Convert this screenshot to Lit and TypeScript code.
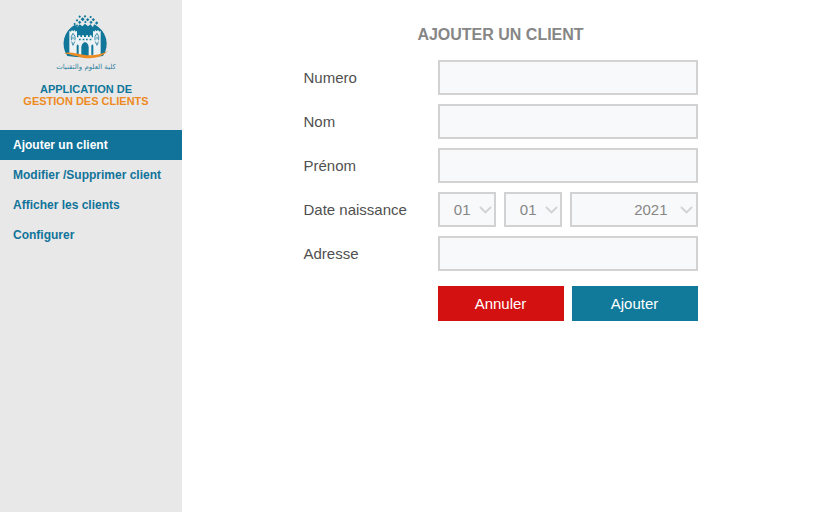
import { LitElement, html, css, svg } from "lit";
import { customElement, property, state } from "lit/decorators.js";
import { classMap } from "lit/directives/class-map.js";

const SPARKS: Array<[number, number, number]> = [
  [108, 25, 4], [92, 26, 4], [125, 27, 4], [84, 37, 4], [101, 34, 6],
  [116, 35, 5], [133, 35, 5], [92, 43, 5], [109, 42, 4], [126, 43, 5], [143, 45, 5],
  [77, 48, 4], [137, 53, 4], [84, 53, 4],
];

@customElement("faculty-logo")
class FacultyLogo extends LitElement {
  static styles = css`
    :host { display: flex; flex-direction: column; align-items: center; }
    .mark { display: block; width: 74px; height: 54px; }
    .caption {
      font: 7px/10px "DejaVu Sans", sans-serif;
      color: #2f819e;
      white-space: nowrap;
    }
  `;
  render() {
    return html`
      <svg class="mark" viewBox="0 0 222 162" aria-hidden="true">
        <path fill="#11779a" d="M55 144A65 65 0 0 1 78 50L85 58L92 49L100 55L108 47L117 55L125 49L131 57L138 50A65 65 0 0 1 162 144Q108 152 55 144Z" />
        ${SPARKS.map(([x, y, r]) => svg`<path fill="#11779a" d="M${x} ${y - r}l${r} ${r}l${-r} ${r}l${-r} ${-r}z" />`)}
        <path fill="#edf2f4" d="M61 68L65 71L69 66L73 70L77 66L80 71L84 68V88H88V82H94V87H99V82H105V87H111V82H117V87H122V82H128V88H132V68L136 71L139 66L143 70L147 66L151 71L155 68V140Q108 150 61 137Z" />
        <g fill="none" stroke="#3b8daa" stroke-width="3">
          <path d="M67 97V85L72 76L78 85V97M138 97V85L144 76L149 85V97" />
          <path d="M72 86V94M144 86V94M68 101L72 112L77 101M139 101L144 112L148 101" />
        </g>
        <g fill="#11779a">
          <path d="M97 146V118Q98 105 108 102Q118 105 119 118V146Z" />
          <path d="M90 92h5v5h-5zM101 92h5v5h-5zM111 92h5v5h-5zM122 92h5v5h-5z" />
          <path d="M83 140V113Q86 106 89 113V141ZM127 141V113Q130 106 133 113V140Z" />
        </g>
        <path fill="#ee8a22" d="M45 136C63 130 83 138 108 141C133 144 154 140 176 129C158 148 131 154 101 149C77 144 62 139 45 136Z" />
      </svg>
      <span class="caption" lang="ar" dir="rtl">كلية العلوم والتقنيات</span>
    `;
  }
}

@customElement("date-select")
class DateSelect extends LitElement {
  @property() label = "";
  @property({ type: Array }) options: string[] = [];
  static styles = css`
    :host { display: block; position: relative; }
    .select {
      appearance: none;
      box-sizing: border-box;
      width: 100%;
      height: 35px;
      margin: 0;
      padding: 0 23px 0 0;
      border: 2px solid #d2d2d2;
      border-radius: 0;
      background: #f8f9fb;
      color: #868686;
      font: 15px/20px "Liberation Sans", Arial, sans-serif;
      text-align: right;
      text-align-last: right;
    }
    .chevron {
      position: absolute;
      right: 4px;
      top: 14px;
      width: 13px;
      height: 8px;
      pointer-events: none;
    }
    :host(.year) .select { padding-right: 28px; }
    :host(.year) .chevron { right: 5px; }
  `;
  render() {
    return html`
      <select class="select" aria-label=${this.label}>
        ${this.options.map((o) => html`<option>${o}</option>`)}
      </select>
      <svg class="chevron" viewBox="0 0 13 8" aria-hidden="true">
        <path d="M1 1L6.5 6.5L12 1" fill="none" stroke="#d2d2d2" stroke-width="1.8" />
      </svg>
    `;
  }
}

const MENU = ["Ajouter un client", "Modifier /Supprimer client", "Afficher les clients", "Configurer"];
const range = (n: number) => Array.from({ length: n }, (_, i) => String(i + 1).padStart(2, "0"));
const YEARS = Array.from({ length: 100 }, (_, i) => String(2021 - i));

@customElement("app-root")
class AppRoot extends LitElement {
  @state() private current = 0;

  static styles = css`
    :host {
      display: grid;
      grid-template-columns: 182px minmax(0, 1fr);
      min-height: 100vh;
      background: #fff;
      font-family: "Liberation Sans", Arial, sans-serif;
    }
    .sidebar { background: #e8e8e8; }
    .brand {
      display: flex;
      flex-direction: column;
      align-items: center;
      padding: 8px 10px 23px 0;
    }
    .name {
      margin: 11px 0 0;
      font-size: 11px;
      line-height: 12px;
      font-weight: bold;
      text-align: center;
      color: #11779a;
    }
    .accent { display: block; color: #ee8a22; }
    .menu { display: flex; flex-direction: column; }
    .item {
      padding: 0 13px;
      font-size: 12px;
      line-height: 30px;
      font-weight: bold;
      color: #11739a;
      text-decoration: none;
    }
    .item.active { background: #11739a; color: #fff; }
    .content {
      display: flex;
      justify-content: center;
      align-items: flex-start;
      padding: 25px 16px 24px;
    }
    .form { flex: 0 1 394px; }
    .title {
      margin: 0 0 15px;
      font-size: 16px;
      line-height: 20px;
      text-align: center;
      color: #868686;
    }
    .fields {
      display: grid;
      grid-template-columns: 134px minmax(0, 1fr);
      row-gap: 9px;
      align-items: center;
    }
    .label { font-size: 15px; line-height: 20px; color: #505050; }
    .input {
      box-sizing: border-box;
      width: 100%;
      height: 35px;
      margin: 0;
      padding: 0 10px;
      border: 2px solid #d2d2d2;
      border-radius: 0;
      background: #f8f9fb;
      color: #505050;
      font: 15px/20px "Liberation Sans", Arial, sans-serif;
    }
    .date { display: grid; grid-template-columns: 58px 58px minmax(0, 1fr); gap: 8px; }
    .actions {
      display: grid;
      grid-template-columns: 1fr 1fr;
      gap: 8px;
      margin: 15px 0 0 134px;
    }
    .button {
      height: 35px;
      padding: 0;
      border: 0;
      color: #fff;
      font: 15px/20px "Liberation Sans", Arial, sans-serif;
    }
    .cancel { background: #d41111; }
    .submit { background: #11799a; }
  `;

  private field(id: string, label: string) {
    return html`<label class="label" for=${id}>${label}</label><input class="input" id=${id} type="text" />`;
  }

  render() {
    return html`
      <aside class="sidebar">
        <div class="brand">
          <faculty-logo></faculty-logo>
          <p class="name">APPLICATION DE <span class="accent">GESTION DES CLIENTS</span></p>
        </div>
        <nav class="menu">
          ${MENU.map((text, i) => html`
            <a href="#" class=${classMap({ item: true, active: i === this.current })}
              @click=${(e: Event) => { e.preventDefault(); this.current = i; }}>${text}</a>`)}
        </nav>
      </aside>
      <main class="content">
        <form class="form" @submit=${(e: Event) => e.preventDefault()}>
          <h1 class="title">AJOUTER UN CLIENT</h1>
          <div class="fields">
            ${this.field("numero", "Numero")}
            ${this.field("nom", "Nom")}
            ${this.field("prenom", "Prénom")}
            <span class="label" id="birth">Date naissance</span>
            <div class="date" role="group" aria-labelledby="birth">
              <date-select label="Jour" .options=${range(31)}></date-select>
              <date-select label="Mois" .options=${range(12)}></date-select>
              <date-select class="year" label="Année" .options=${YEARS}></date-select>
            </div>
            ${this.field("adresse", "Adresse")}
          </div>
          <div class="actions">
            <button class="button cancel" type="reset">Annuler</button>
            <button class="button submit" type="submit">Ajouter</button>
          </div>
        </form>
      </main>
    `;
  }
}
